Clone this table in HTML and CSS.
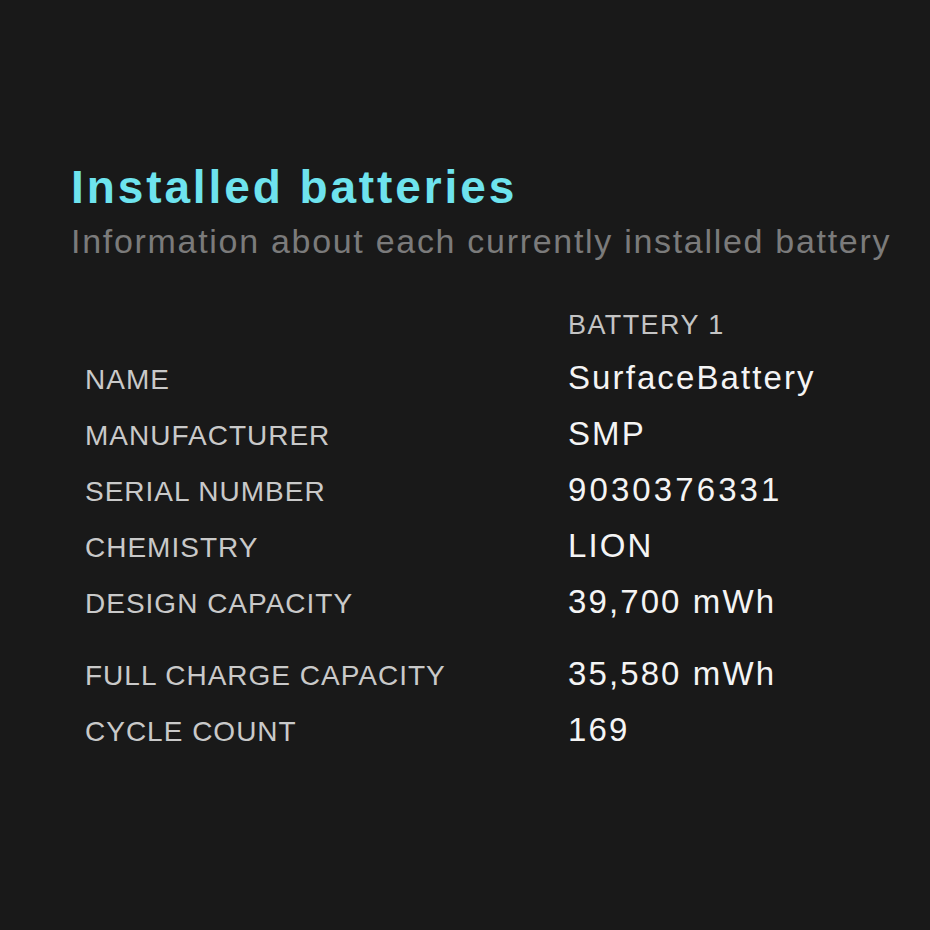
FILE: index.html
```html
<!DOCTYPE html>
<html>
<head>
<meta charset="utf-8">
<link rel="stylesheet" href="styles.css">
</head>
<body>
<main class="page">
  <header class="head">
    <h1 class="title">Installed batteries</h1>
    <p class="subtitle">Information about each currently installed battery</p>
  </header>
  <div class="table">
    <div class="row hdr"><span class="label"></span><span class="colhead">BATTERY 1</span></div>
    <div class="row"><span class="label">NAME</span><span class="value">SurfaceBattery</span></div>
    <div class="row"><span class="label">MANUFACTURER</span><span class="value">SMP</span></div>
    <div class="row"><span class="label">SERIAL NUMBER</span><span class="value num">9030376331</span></div>
    <div class="row"><span class="label">CHEMISTRY</span><span class="value">LION</span></div>
    <div class="row"><span class="label">DESIGN CAPACITY</span><span class="value">39,700 mWh</span></div>
    <div class="row sep"><span class="label">FULL CHARGE CAPACITY</span><span class="value">35,580 mWh</span></div>
    <div class="row"><span class="label">CYCLE COUNT</span><span class="value">169</span></div>
  </div>
</main>
</body>
</html>
```
FILE: styles.css
```css
html, body {
  margin: 0;
  padding: 0;
  background: #191919;
}
body {
  width: 930px;
  height: 930px;
  font-family: "Liberation Sans", Arial, sans-serif;
}
.page {
  padding: 162px 0 0 71px;
}
.title {
  margin: 0;
  font-size: 46px;
  line-height: 50px;
  font-weight: 700;
  letter-spacing: 2.9px;
  color: #6ee3ee;
  white-space: nowrap;
}
.subtitle {
  margin: 9px 0 0 0;
  font-size: 34px;
  line-height: 40px;
  color: #7b7b7b;
  letter-spacing: 1.7px;
  white-space: nowrap;
}
.table {
  margin: 35px 0 0 14px;
  display: flex;
  flex-direction: column;
}
.row {
  display: grid;
  grid-template-columns: 483px 1fr;
  height: 56px;
  line-height: 56px;
  white-space: nowrap;
}
.row.hdr {
  height: 54px;
  line-height: 58px;
}
.row.sep {
  margin-top: 16px;
}
.label {
  font-size: 28px;
  color: #c9c9c9;
  letter-spacing: 1px;
  padding-top: 2px;
}
.colhead {
  font-size: 27px;
  color: #c4c4c4;
  letter-spacing: 1.4px;
}
.value {
  font-size: 33px;
  color: #f4f4f4;
  letter-spacing: 2.1px;
}
.value.num {
  letter-spacing: 3.1px;
}
```
